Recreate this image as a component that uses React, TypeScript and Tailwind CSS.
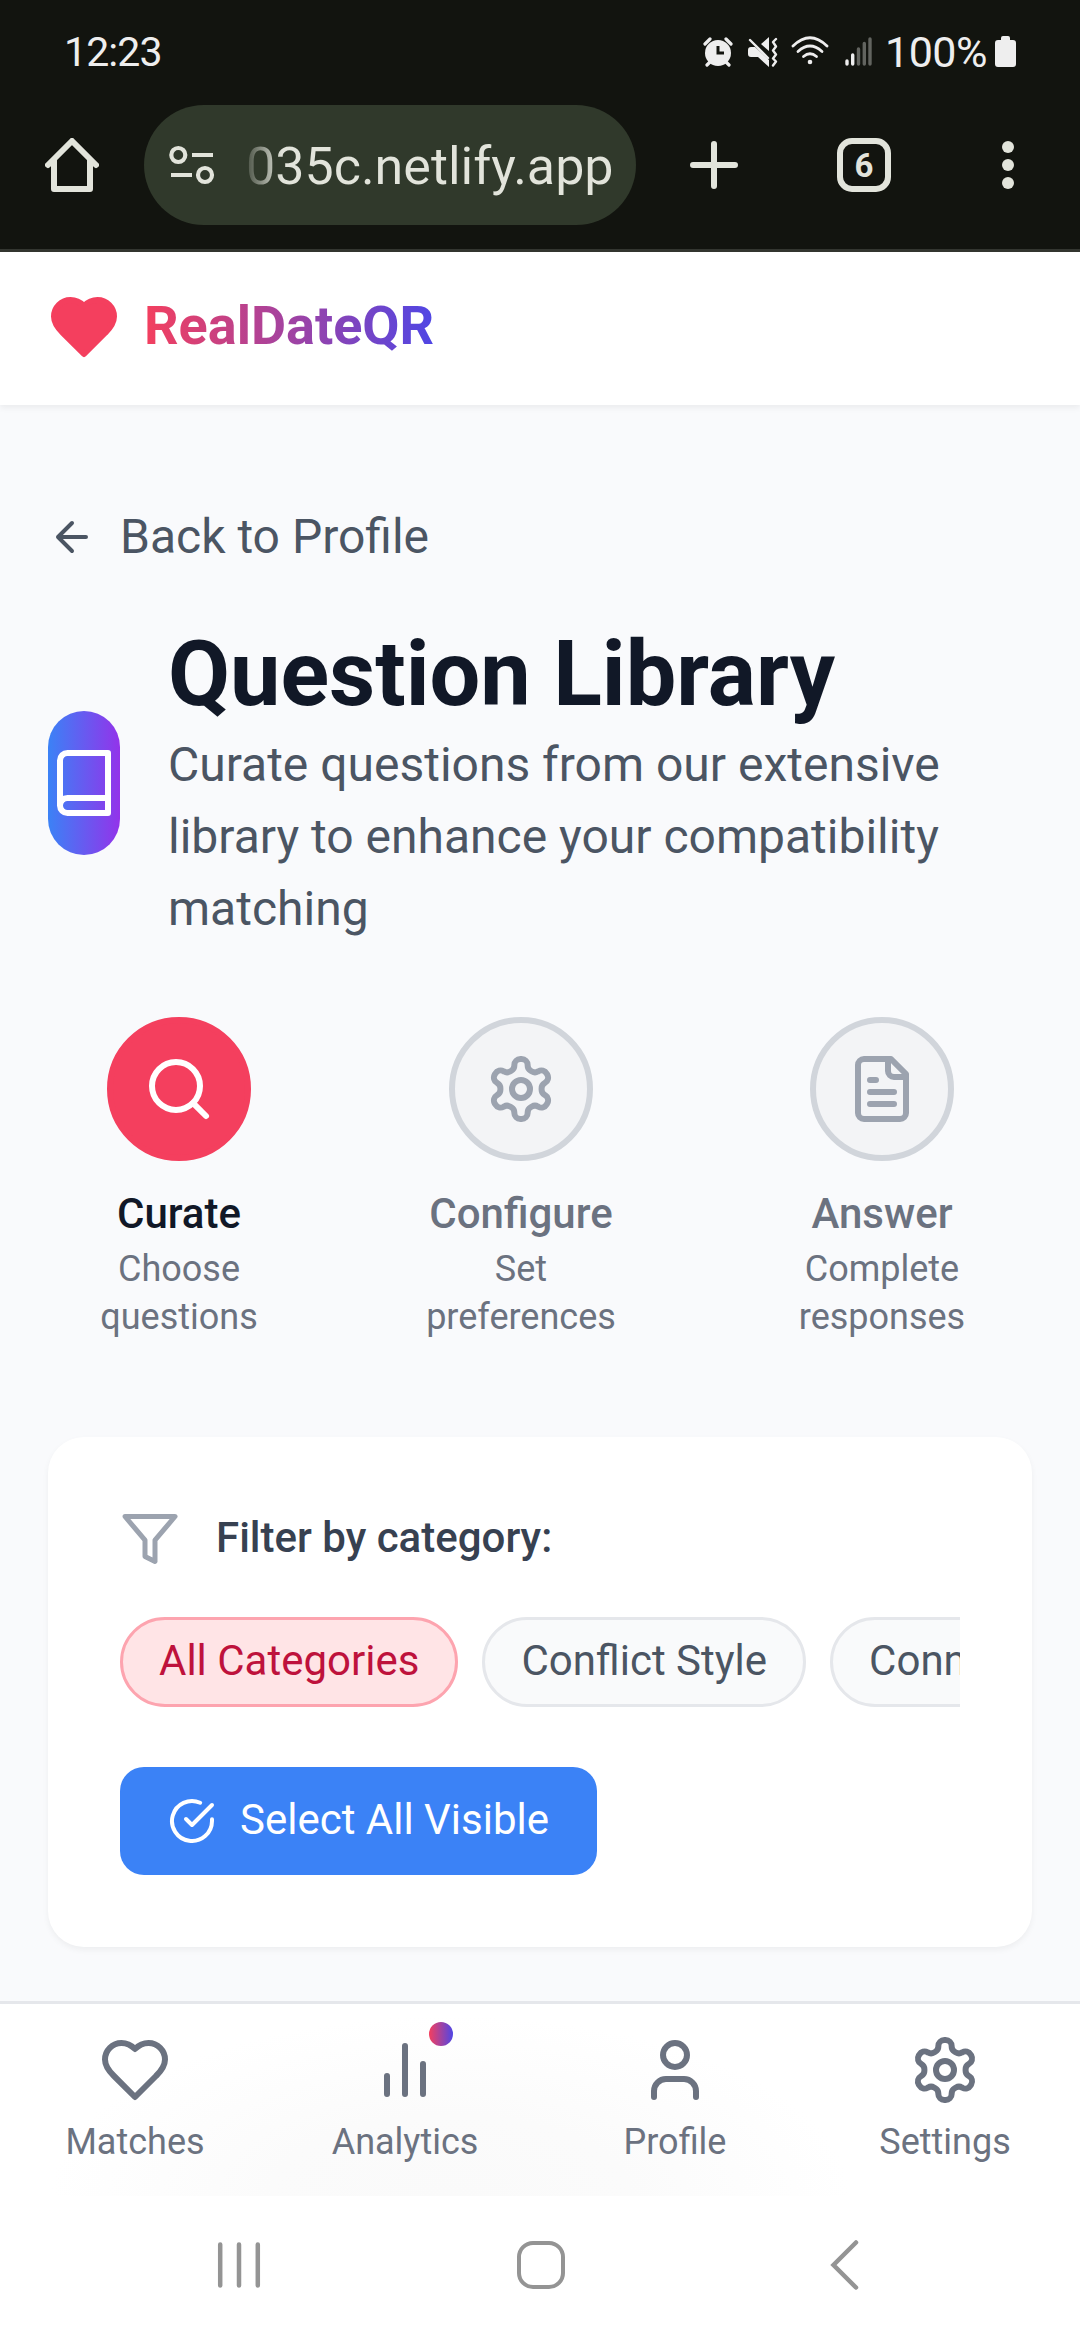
import { useState } from "react";
import type { ReactNode } from "react";
import clsx from "clsx";

type IconProps = { className?: string; fill?: string; children?: ReactNode };

function Icon({ className, fill = "none", children }: IconProps) {
  return (
    <svg
      viewBox="0 0 24 24"
      fill={fill}
      stroke="currentColor"
      strokeWidth="2"
      strokeLinecap="round"
      strokeLinejoin="round"
      className={clsx("shrink-0", className)}
    >
      {children}
    </svg>
  );
}

const heart = (
  <path d="M19 14c1.49-1.46 3-3.21 3-5.5A5.5 5.5 0 0 0 16.5 3c-1.76 0-3 .5-4.5 2-1.5-1.5-2.74-2-4.5-2A5.5 5.5 0 0 0 2 8.5c0 2.3 1.5 4.05 3 5.5l7 7Z" />
);

const gear = (
  <>
    <path d="M12.22 2h-.44a2 2 0 0 0-2 2v.18a2 2 0 0 1-1 1.73l-.43.25a2 2 0 0 1-2 0l-.15-.08a2 2 0 0 0-2.73.73l-.22.38a2 2 0 0 0 .73 2.73l.15.1a2 2 0 0 1 1 1.72v.51a2 2 0 0 1-1 1.74l-.15.09a2 2 0 0 0-.73 2.73l.22.38a2 2 0 0 0 2.73.73l.15-.08a2 2 0 0 1 2 0l.43.25a2 2 0 0 1 1 1.73V20a2 2 0 0 0 2 2h.44a2 2 0 0 0 2-2v-.18a2 2 0 0 1 1-1.73l.43-.25a2 2 0 0 1 2 0l.15.08a2 2 0 0 0 2.73-.73l.22-.39a2 2 0 0 0-.73-2.73l-.15-.08a2 2 0 0 1-1-1.74v-.5a2 2 0 0 1 1-1.74l.15-.09a2 2 0 0 0 .73-2.73l-.22-.38a2 2 0 0 0-2.73-.73l-.15.08a2 2 0 0 1-2 0l-.43-.25a2 2 0 0 1-1-1.73V4a2 2 0 0 0-2-2z" />
    <circle cx="12" cy="12" r="3" />
  </>
);

const steps = [
  {
    title: "Curate",
    text: "Choose questions",
    icon: (
      <>
        <circle cx="11" cy="11" r="8" />
        <path d="m21 21-4.3-4.3" />
      </>
    ),
  },
  { title: "Configure", text: "Set preferences", icon: gear },
  {
    title: "Answer",
    text: "Complete responses",
    icon: (
      <>
        <path d="M15 2H6a2 2 0 0 0-2 2v16a2 2 0 0 0 2 2h12a2 2 0 0 0 2-2V7Z" />
        <path d="M14 2v4a2 2 0 0 0 2 2h4" />
        <path d="M10 9H8M16 13H8M16 17H8" />
      </>
    ),
  },
];

const categories = ["All Categories", "Conflict Style", "Connection"];

const tabs = [
  { label: "Matches", icon: heart },
  { label: "Analytics", icon: <path d="M18 20V10M12 20V4M6 20v-6" />, dot: true },
  {
    label: "Profile",
    icon: (
      <>
        <path d="M19 21v-2a4 4 0 0 0-4-4H9a4 4 0 0 0-4 4v2" />
        <circle cx="12" cy="7" r="4" />
      </>
    ),
  },
  { label: "Settings", icon: gear },
];

function StatusBar() {
  return (
    <div className="flex h-[105px] items-start justify-between px-[64px] pt-[27px] text-[#eeeeee]">
      <span className="text-[41px] leading-[50px] tracking-[-0.9px]">12:23</span>
      <div className="flex items-start">
        {/* alarm */}
        <svg viewBox="0 0 30 30" className="mt-[10px] h-[30px] w-[30px]">
          <path d="M2 7 7 2M28 7l-5-5M7 25l-3 3M23 25l3 3" stroke="currentColor" strokeWidth="3.2" strokeLinecap="round" />
          <circle cx="15" cy="16" r="13" fill="currentColor" />
          <path d="M15 9v7h6" fill="none" stroke="#12140f" strokeWidth="3" />
        </svg>
        {/* muted, vibrate */}
        <svg viewBox="0 0 30 30" className="ml-[15px] mt-[10px] h-[30px] w-[30px]">
          <path d="M0 13q0-3 3-3h4l14 13v7L10 20H3q-3 0-3-3zM13 7l8-7v14z" fill="currentColor" />
          <path d="M2 3l18 18" stroke="currentColor" strokeWidth="2.4" strokeLinecap="round" />
          <path d="M28 2l-3 3 3 4.5-3 4 3 4-3 4 3 3-3 4" fill="none" stroke="currentColor" strokeWidth="2.4" strokeLinecap="round" strokeLinejoin="round" />
        </svg>
        {/* wifi */}
        <svg viewBox="0 0 38 30" className="ml-[13px] mt-[8px] h-[30px] w-[38px]">
          <g fill="none" stroke="currentColor" strokeWidth="2.8" strokeLinecap="round">
            <path d="M2 11Q19-5.5 36 11" />
            <path d="M7 16.5q12-11 24 0" />
            <path d="M12.5 21.5q6.5-5.5 13 0" />
          </g>
          <circle cx="19" cy="27" r="2.3" fill="currentColor" />
        </svg>
        {/* signal */}
        <svg viewBox="0 0 28 30" className="ml-[16px] mt-[10px] h-[30px] w-[28px]">
          <g fill="none" stroke="currentColor" strokeWidth="3.4" strokeLinecap="round">
            <path d="M2 24v3M7.7 18v9" />
            <path d="M13.5 12v15M19.3 6.5v20.500M25 2v25" stroke="#62645f" />
          </g>
        </svg>
        <span className="ml-[12px] w-[105px] whitespace-nowrap text-[43px] leading-[50px] tracking-[-0.5px]">
          100%
        </span>
        <svg viewBox="0 0 21 32" className="ml-[5px] mt-[9px] h-[32px] w-[21px]">
          <path d="M6 2q0-2 2-2h5q2 0 2 2v2h3q3 0 3 3v21q0 3-3 3H3q-3 0-3-3V7q0-3 3-3h3z" fill="currentColor" />
        </svg>
      </div>
    </div>
  );
}

function BrowserBar() {
  return (
    <div className="flex h-[147px] items-start border-b-3 border-[#333630] text-[#e2e4db]">
      <svg viewBox="0 0 54 54" className="ml-[45px] mt-[33px] h-[54px] w-[54px]" fill="none" stroke="currentColor" strokeWidth="6" strokeLinecap="round" strokeLinejoin="round">
        <path d="M3 27 27 3l24 24M9 22v29h36V22" />
      </svg>
      <div className="ml-[45px] flex h-[120px] w-[492px] items-center rounded-full bg-[#30392b] pl-[25px]">
        <svg viewBox="0 0 46 40" className="h-[40px] w-[46px]" fill="none" stroke="currentColor" strokeWidth="4.2">
          <circle cx="9.3" cy="10" r="7" />
          <path d="M23 10h21M2 30h21" />
          <circle cx="36" cy="30" r="7" />
        </svg>
        <span className="ml-[25px] mt-[3px] bg-linear-to-r/srgb from-[#30392b] via-[#e2e4db] via-[42px] to-[#e2e4db] bg-clip-text pl-[6px] text-[52px] leading-[72px] text-transparent">
          035c.netlify.app
        </span>
      </div>
      <svg viewBox="0 0 48 48" className="ml-[54px] mt-[36px] h-[48px] w-[48px]" stroke="currentColor" strokeWidth="6" strokeLinecap="round">
        <path d="M24 3v42M3 24h42" />
      </svg>
      <div className="ml-[99px] mt-[33px] flex h-[54px] w-[54px] items-center justify-center rounded-[15px] border-6 border-[#e2e4db] text-[33px] font-bold leading-none">
        6
      </div>
      <div className="ml-[111px] mt-[36px] flex flex-col gap-[6px]">
        <span className="h-3 w-3 rounded-full bg-[#e2e4db]" />
        <span className="h-3 w-3 rounded-full bg-[#e2e4db]" />
        <span className="h-3 w-3 rounded-full bg-[#e2e4db]" />
      </div>
    </div>
  );
}

function Header() {
  return (
    <header className="flex h-[153px] items-start gap-6 bg-white px-12 pt-[32px] shadow-[0_3px_6px_rgba(0,0,0,0.06)]">
      <Icon className="mt-[7px] h-18 w-18 text-[#f43f5e]" fill="currentColor">
        {heart}
      </Icon>
      <span className="bg-linear-to-r/srgb from-[#f43f5e] to-[#4f46e5] bg-clip-text text-[54px] font-bold leading-[84px] text-transparent">
        RealDateQR
      </span>
    </header>
  );
}

function Steps({ current }: { current: number }) {
  return (
    <div className="mt-18 grid grid-cols-[262px_422px_300px]">
      {steps.map((step, i) => {
        const active = i === current;
        return (
          <div key={step.title} className="flex flex-col items-center text-center">
            <div
              className={clsx(
                "flex h-36 w-36 items-center justify-center rounded-full border-6",
                active
                  ? "border-[#f43f5e] bg-[#f43f5e] text-white"
                  : "border-[#d1d5db] bg-[#f3f4f6] text-[#9ca3af]"
              )}
            >
              <Icon className="h-18 w-18">{step.icon}</Icon>
            </div>
            <p
              className={clsx(
                "mt-[23px] mb-px text-[42px] font-medium leading-[60px]",
                active ? "text-[#111827]" : "text-[#6b7280]"
              )}
            >
              {step.title}
            </p>
            <p className="w-min text-[36px] leading-[48px] text-[#6b7280]">{step.text}</p>
          </div>
        );
      })}
    </div>
  );
}

function FilterCard() {
  const [selected, setSelected] = useState("All Categories");

  return (
    <section className="mt-24 rounded-[36px] bg-white p-18 shadow-[0_3px_6px_rgba(0,0,0,0.05)]">
      <div className="flex items-center gap-9">
        <Icon className="h-15 w-15 text-[#9ca3af]">
          <polygon points="22 3 2 3 10 12.46 10 19 14 21 14 12.46 22 3" />
        </Icon>
        <span className="pb-0.5 text-[42px] font-medium leading-[58px] text-[#374151]">
          Filter by category:
        </span>
      </div>

      <div className="mt-12 flex gap-6 overflow-hidden">
        {categories.map((name) => (
          <button
            key={name}
            onClick={() => setSelected(name)}
            className={clsx(
              "shrink-0 whitespace-nowrap rounded-full border-3 px-9 pb-[13px] pt-[11px] text-[42px] leading-[60px]",
              name === selected
                ? "border-[#fda4af] bg-[#ffe4e6] text-[#be123c]"
                : "border-[#e5e7eb] bg-[#f9fafb] text-[#4b5563]"
            )}
          >
            {name}
          </button>
        ))}
      </div>

      <button className="mt-15 flex items-center gap-6 rounded-3xl bg-[#3b82f6] px-12 py-6 text-[42px] leading-[58px] text-white">
        <Icon className="h-12 w-12">
          <path d="M22 11.08V12a10 10 0 1 1-5.93-9.14" />
          <path d="m9 11 3 3L22 4" />
        </Icon>
        <span className="pb-0.5">Select All Visible</span>
      </button>
    </section>
  );
}

function BottomNav() {
  return (
    <nav className="grid h-[195px] grid-cols-4 border-t-3 border-[#e5e7eb] bg-[radial-gradient(400px_180px_at_450px_100%,#fafafa_0%,#fbfbfb_45%,#ffffff_100%)] pt-[30px]">
      {tabs.map((tab) => (
        <a key={tab.label} className="flex flex-col items-center text-[#6b7280]">
          <div className="relative">
            <Icon className="h-18 w-18">{tab.icon}</Icon>
            {tab.dot && (
              <span className="absolute -right-3 -top-3 h-6 w-6 rounded-full bg-linear-to-r/srgb from-[#f43f5e] to-[#4f46e5]" />
            )}
          </div>
          <span className="mt-3 text-[36px] leading-[48px]">{tab.label}</span>
        </a>
      ))}
    </nav>
  );
}

function SystemNav() {
  return (
    <div className="flex h-36 items-center bg-white pb-1.5 text-[#949494]">
      <svg viewBox="0 0 44 48" className="ml-[217px] h-[48px] w-[44px]" stroke="currentColor" strokeWidth="4.5" strokeLinecap="round">
        <path d="M3.2 3.5v41M22 3.5v41M40.800 3.5v41" />
      </svg>
      <div className="ml-[256px] h-[48px] w-[48px] rounded-[16px] border-[4.500px] border-[#949494]" />
      <svg viewBox="0 0 30 50" className="ml-[265px] h-[50px] w-[30px]" fill="none" stroke="currentColor" strokeWidth="4.5" strokeLinecap="round">
        <path d="M26 2.5 3.5 25 26 47.5" />
      </svg>
    </div>
  );
}

export default function App() {
  return (
    <div className="flex h-[2340px] w-[1080px] flex-col overflow-hidden bg-[#f9fafc] font-[Roboto,sans-serif]">
      <div className="bg-[#12140f]">
        <StatusBar />
        <BrowserBar />
      </div>
      <Header />

      <main className="min-h-0 flex-1 px-12 pt-24">
        <a className="flex items-center gap-6 text-[48px] leading-[72px] text-[#4b5563]">
          <Icon className="h-12 w-12">
            <path d="m12 19-7-7 7-7M19 12H5" />
          </Icon>
          Back to Profile
        </a>

        <div className="mt-12 flex items-center gap-12">
          <div className="flex h-36 w-18 shrink-0 items-center justify-center rounded-full bg-linear-to-r/srgb from-[#3b82f6] to-[#9333ea] text-white">
            <Icon className="h-18 w-18">
              <path d="M4 19.5v-15A2.5 2.5 0 0 1 6.5 2H20v20H6.5a2.5 2.5 0 0 1 0-5H20" />
            </Icon>
          </div>
          <div>
            <h1 className="text-[90px] font-bold leading-[108px] text-[#111827]">
              Question Library
            </h1>
            <p className="text-[48px] leading-[72px] text-[#4b5563]">
              Curate questions from our extensive library to enhance your compatibility matching
            </p>
          </div>
        </div>

        <Steps current={0} />
        <FilterCard />
      </main>

      <BottomNav />
      <SystemNav />
    </div>
  );
}
